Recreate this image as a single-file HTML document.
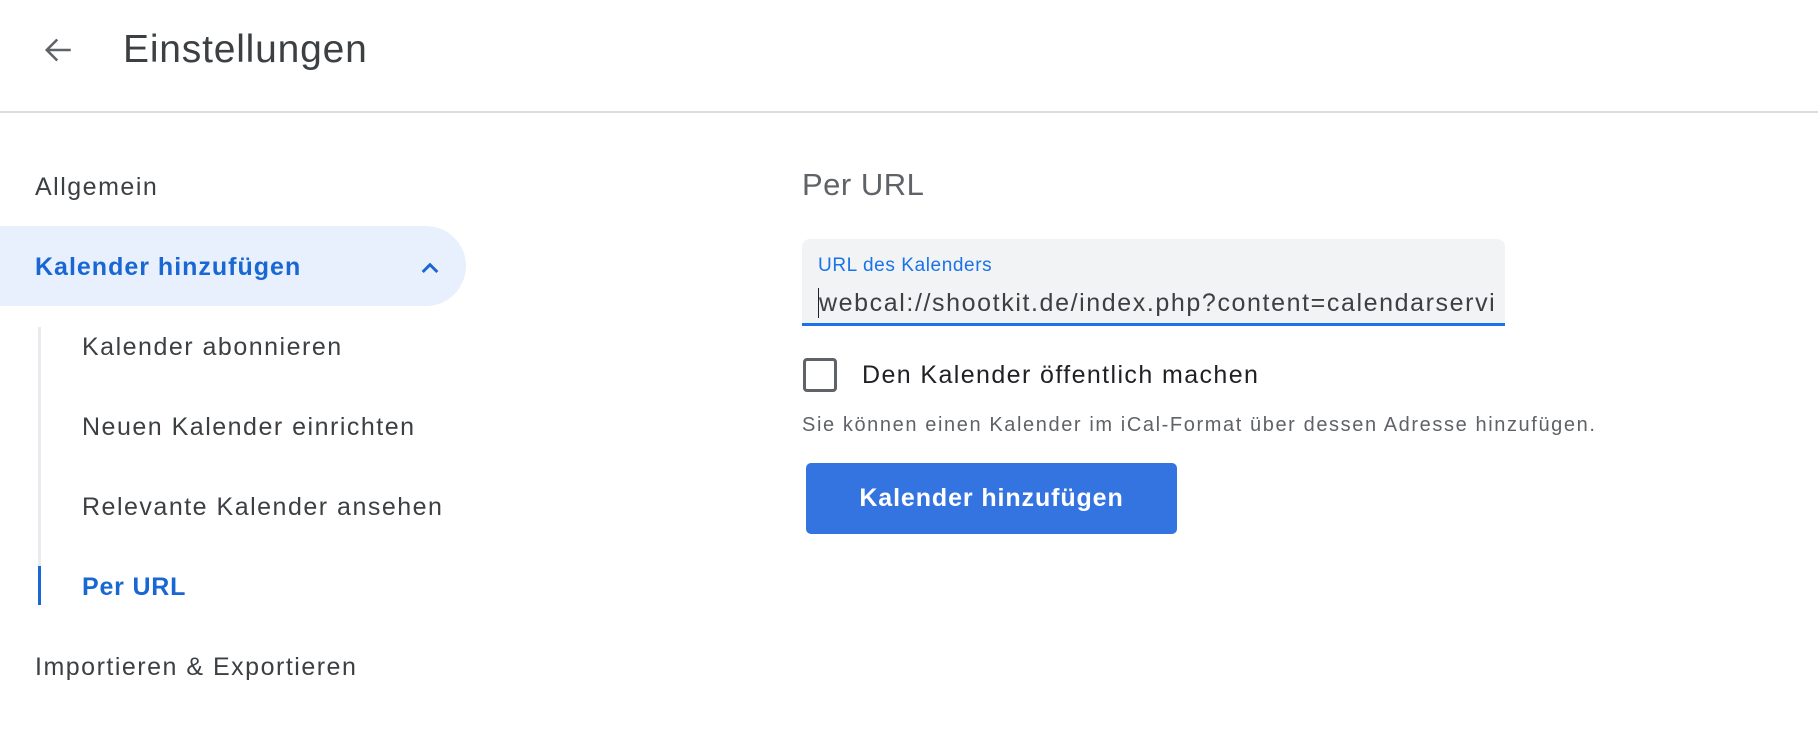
<!DOCTYPE html>
<html><head><meta charset="utf-8"><style>
*{margin:0;padding:0;box-sizing:border-box}
body{width:1818px;height:738px;background:#fff;font-family:"Liberation Sans",Arial,sans-serif;position:relative;overflow:hidden;color:#3c4043}
.a{position:absolute;white-space:nowrap}
.nav{font-size:25px;letter-spacing:1.5px;color:#3c4043;line-height:30px}
</style></head><body>
<svg class="a" style="left:40px;top:32px" width="36" height="36" viewBox="0 0 24 24"><path d="M20.5 12H4.5M11.5 5l-7 7 7 7" fill="none" stroke="#5f6368" stroke-width="1.7"/></svg>
<div class="a" style="left:123px;top:27px;font-size:39px;letter-spacing:0.8px;color:#3c4043;line-height:46px">Einstellungen</div>
<div class="a" style="left:0;top:111px;width:1818px;height:2px;background:#dadce0"></div>

<div class="a nav" style="left:35px;top:172px">Allgemein</div>
<div class="a" style="left:0;top:226px;width:466px;height:80px;background:#e8f0fe;border-radius:0 40px 40px 0"></div>
<div class="a nav" style="left:35px;top:252px;color:#1967d2;font-weight:bold;letter-spacing:1px">Kalender hinzufügen</div>
<svg class="a" style="left:414px;top:252px" width="32" height="32" viewBox="0 0 24 24"><path d="M6.5 15l5.5-5.5 5.5 5.5" fill="none" stroke="#1967d2" stroke-width="2.2"/></svg>
<div class="a" style="left:38px;top:327px;width:3px;height:278px;background:#e8eaed"></div>
<div class="a" style="left:38px;top:566px;width:3px;height:39px;background:#1967d2"></div>
<div class="a nav" style="left:82px;top:332px">Kalender abonnieren</div>
<div class="a nav" style="left:82px;top:412px">Neuen Kalender einrichten</div>
<div class="a nav" style="left:82px;top:492px">Relevante Kalender ansehen</div>
<div class="a nav" style="left:82px;top:572px;color:#1967d2;font-weight:bold;letter-spacing:0.8px">Per URL</div>
<div class="a nav" style="left:35px;top:652px">Importieren &amp; Exportieren</div>

<div class="a" style="left:802px;top:167px;font-size:31px;color:#5f6368;letter-spacing:0.5px;line-height:36px">Per URL</div>
<div class="a" style="left:802px;top:239px;width:703px;height:87px;background:#f1f3f4;border-radius:8px 8px 0 0;border-bottom:3px solid #1a73e8"></div>
<div class="a" style="left:818px;top:255px;font-size:19px;color:#1a73e8;letter-spacing:0.6px;line-height:22px">URL des Kalenders</div>
<div class="a" style="left:818px;top:288px;width:675px;overflow:hidden;font-size:25px;color:#3c4043;letter-spacing:1.6px;line-height:30px;border-left:1px solid #202124">webcal://shootkit.de/index.php?content=calendarservice</div>
<div class="a" style="left:803px;top:358px;width:34px;height:34px;border:3px solid #5f6368;border-radius:4px"></div>
<div class="a nav" style="left:862px;top:360px;color:#202124;letter-spacing:1.4px">Den Kalender öffentlich machen</div>
<div class="a" style="left:802px;top:413px;font-size:20px;color:#5f6368;letter-spacing:1.6px;line-height:24px">Sie können einen Kalender im iCal-Format über dessen Adresse hinzufügen.</div>
<div class="a" style="left:806px;top:463px;width:371px;height:71px;background:#3474e0;border-radius:5px;color:#fff;font-size:25px;font-weight:bold;text-align:center;line-height:71px;letter-spacing:0.9px">Kalender hinzufügen</div>
</body></html>
